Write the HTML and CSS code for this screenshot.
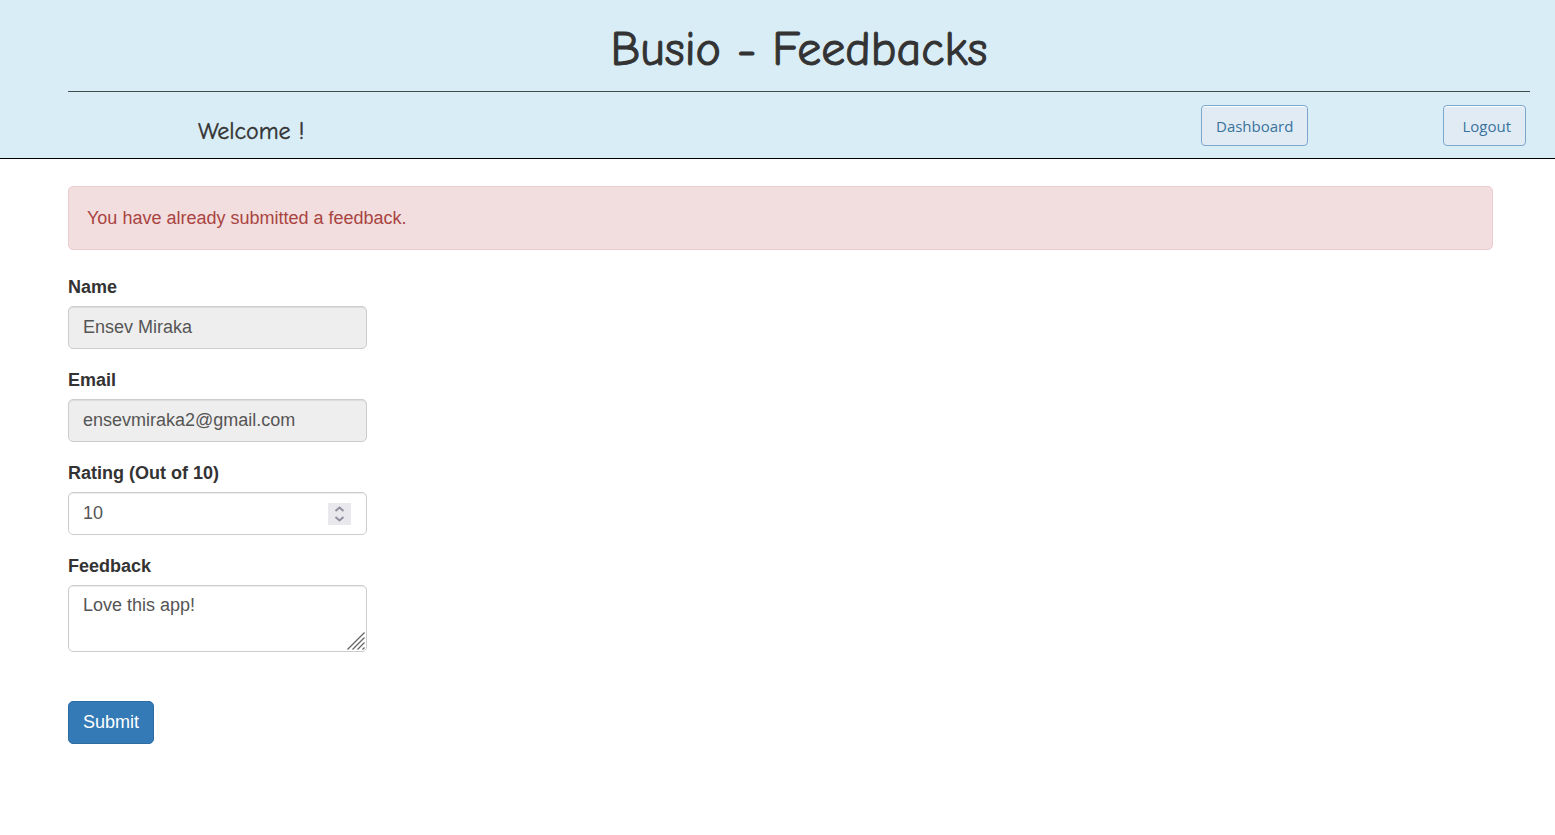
FILE: index.html
```html
<!DOCTYPE html>
<html lang="en">
<head>
  <meta charset="utf-8">
  <meta name="viewport" content="width=device-width, initial-scale=1">
  <title>Busio - Feedbacks</title>
  <link rel="stylesheet" href="styles.css">
</head>
<body>
  <header class="site-header">
    <h1 class="title">Busio - Feedbacks</h1>
    <div class="toolbar">
      <h2 class="welcome">Welcome !</h2>
      <nav class="actions">
        <a class="nav-button" href="#dashboard">Dashboard</a>
        <a class="nav-button nav-button-logout" href="#logout">Logout</a>
      </nav>
    </div>
  </header>
  <main class="content">
    <div class="alert" role="alert">You have already submitted a feedback.</div>
    <form class="feedback-form">
      <div class="field">
        <label for="name">Name</label>
        <input class="control" id="name" type="text" value="Ensev Miraka" readonly>
      </div>
      <div class="field">
        <label for="email">Email</label>
        <input class="control" id="email" type="email" value="ensevmiraka2@gmail.com" readonly>
      </div>
      <div class="field">
        <label for="rating">Rating (Out of 10)</label>
        <div class="control-wrap">
          <input class="control" id="rating" type="number" min="0" max="10" value="10">
          <svg class="spinner" viewBox="0 0 23 22" aria-hidden="true">
            <path d="M7.5 8 11.5 4.5 15.5 8M7.5 14 11.5 17.5 15.5 14"/>
          </svg>
        </div>
      </div>
      <div class="field">
        <label for="feedback">Feedback</label>
        <div class="control-wrap">
          <textarea class="control" id="feedback">Love this app!</textarea>
          <svg class="grip" viewBox="0 0 18 18" aria-hidden="true">
            <path d="M.5 17.5 17.5.5M5.5 17.5 17.5 5.5M10.5 17.5 17.5 10.5M15.5 17.5 17.5 15.5"/>
          </svg>
        </div>
      </div>
      <button class="submit" type="submit">Submit</button>
    </form>
  </main>
</body>
</html>
```
FILE: styles.css
```css
* {
  box-sizing: border-box;
}

body {
  margin: 0;
  background: #fff;
  color: #333;
  font-family: "Liberation Sans", Arial, sans-serif;
  font-size: 18px;
  line-height: 25px;
}

.site-header {
  padding: 24px 25px 12px 68px;
  background: #d9edf7;
  border-bottom: 1px solid #000;
}

.title,
.welcome {
  margin: 0;
  font-family: "Comic Sans MS", "Comic Neue", cursive;
  font-weight: 400;
  -webkit-text-stroke: 1px currentColor;
}

.title {
  padding-bottom: 15px;
  border-bottom: 1px solid #3f4f4f;
  font-size: 48px;
  line-height: 52px;
  text-align: center;
}

.toolbar {
  display: flex;
  align-items: flex-start;
  justify-content: space-between;
  padding: 13px 4px 0 130px;
}

.welcome {
  padding-top: 12px;
  font-size: 24px;
  line-height: 28px;
  -webkit-text-stroke-width: 0.4px;
}

.actions {
  display: flex;
  gap: 135px;
}

.nav-button {
  padding: 9px 14px 7px;
  border: 1px solid #7ba7cc;
  border-radius: 4px;
  background: #e1ebf4;
  box-shadow: inset 0 1px 0 #fff;
  color: #39739d;
  font-family: "Segoe UI", "Open Sans", sans-serif;
  font-size: 15px;
  line-height: 23px;
  text-decoration: none;
}

.nav-button-logout {
  padding-left: 18px;
}

.content {
  padding: 27px 62px 27px 68px;
}

.alert {
  margin-bottom: 25px;
  padding: 18px;
  border: 1px solid #ebccd1;
  border-radius: 5px;
  background: #f2dede;
  color: #a94442;
  line-height: 26px;
}

.feedback-form {
  width: 299px;
  max-width: 100%;
}

.field {
  margin-bottom: 19px;
}

.field label {
  display: block;
  margin-bottom: 6px;
  font-weight: 700;
}

.control {
  display: block;
  width: 100%;
  height: 43px;
  margin: 0;
  padding: 7px 14px;
  border: 1px solid #ccc;
  border-radius: 5px;
  background: #fff;
  box-shadow: inset 0 1px 1px rgba(0, 0, 0, .075);
  color: #555;
  font: inherit;
}

.control[readonly] {
  background: #eee;
}

textarea.control {
  height: 67px;
  resize: none;
}

.control[type="number"] {
  appearance: textfield;
}

.control[type="number"]::-webkit-inner-spin-button {
  appearance: none;
  margin: 0;
}

.control-wrap {
  position: relative;
}

.spinner {
  position: absolute;
  top: 11px;
  right: 16px;
  width: 23px;
  height: 22px;
  background: #e9e9ed;
  fill: none;
  stroke: #8f8f9d;
  stroke-width: 2;
  pointer-events: none;
}

.grip {
  position: absolute;
  right: 2px;
  bottom: 2px;
  width: 18px;
  height: 18px;
  fill: none;
  stroke: #666;
  stroke-width: 1.3;
  pointer-events: none;
}

.submit {
  margin-top: 30px;
  padding: 8px 14px;
  border: 1px solid #2e6da4;
  border-radius: 5px;
  background: #337ab7;
  color: #fff;
  font: inherit;
}
```
